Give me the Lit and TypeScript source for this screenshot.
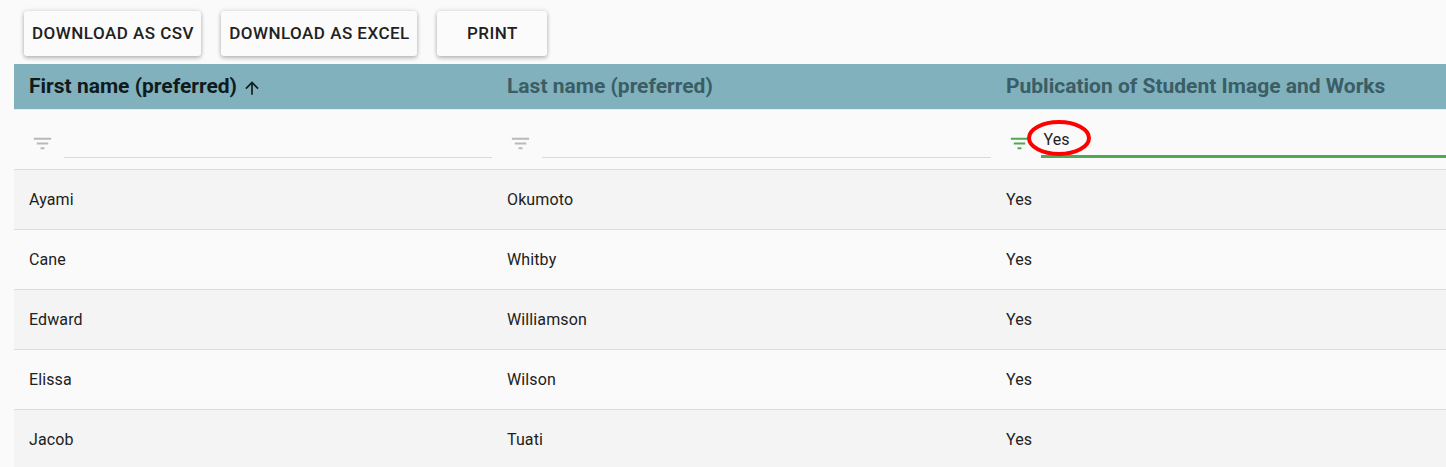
import { LitElement, html, css } from "lit";
import { customElement, property } from "lit/decorators.js";

const rows = [
  ["Ayami", "Okumoto", "Yes"],
  ["Cane", "Whitby", "Yes"],
  ["Edward", "Williamson", "Yes"],
  ["Elissa", "Wilson", "Yes"],
  ["Jacob", "Tuati", "Yes"],
];

@customElement("filter-field")
class FilterField extends LitElement {
  static styles = css`
    :host { display: flex; height: 59px; box-sizing: border-box; padding: 0 0 0 17px; }
    .icon { width: 23px; height: 23px; margin: 22px 10px 0 0; fill: #b9b9b9; flex: none; }
    .field { flex: 1; height: 48px; box-sizing: border-box; border-bottom: 1px solid #dadada; font-size: 16px; line-height: 19px; letter-spacing: 0.1px; color: #212121; padding: 20px 0 0 2.5px; position: relative; }
    .field.on { border-bottom: 3px solid #4fa953; }
    .icon.on { fill: #4fa953; }
    .ring { position: absolute; left: -14px; top: 10px; width: 64px; height: 36px; overflow: visible; }
  `;
  @property({ type: Boolean, reflect: true }) active = false;
  @property() value = "";
  render() {
    const on = this.active ? "on" : "";
    return html`
      <svg class="icon ${on}" viewBox="0 0 24 24"><path d="M10 18h4v-2h-4v2zM3 6v2h18V6H3zm3 7h12v-2H6v2z" /></svg>
      <div class="field ${on}">${this.value}${this.active
        ? html`<svg class="ring" viewBox="0 0 64 36"><ellipse cx="32" cy="18" rx="30" ry="16" fill="none" stroke="#ff0000" stroke-width="4" /></svg>`
        : null}</div>`;
  }
}

@customElement("app-root")
class AppRoot extends LitElement {
  static styles = css`
    :host { display: block; height: 467px; overflow: hidden; background: #fafafa; font-family: Roboto, sans-serif; color: #212121; }
    .bar { display: flex; gap: 20px; height: 64px; box-sizing: border-box; padding: 11px 0 0 24px; }
    .btn { height: 45px; width: 177px; box-sizing: border-box; padding-left: 1px; border-radius: 3px; background: #fbfbfb; box-shadow: 0 2px 4px rgba(0,0,0,.24), 0 0 5px rgba(0,0,0,.12); font-size: 17px; font-weight: 500; letter-spacing: 0.48px; line-height: 45px; text-align: center; white-space: nowrap; color: #212121; }
    .btn.mid { width: 196px; }
    .btn.small { width: 110px; }
    .table { margin-left: 14px; }
    .row { display: grid; grid-template-columns: 478px 499px 1fr; height: 60px; box-sizing: border-box; border-bottom: 1px solid #dcdcdc; }
    .head { height: 46px; background: #80b1bd; border-bottom: 1px solid #e6eaeb; }
    .filters { height: 60px; }
    .odd { background: #f4f4f4; }
    .cell { padding-left: 15px; font-size: 16px; letter-spacing: 0.12px; line-height: 60px; }
    .head .cell { font-size: 21px; letter-spacing: 0; font-weight: 700; line-height: 24px; height: 44px; color: #3b5d65; white-space: nowrap; display: flex; align-items: center; }
    .head .sorted { color: #101b1e; }
    .arrow { width: 20px; height: 20px; margin: 3px 0 0 5px; fill: currentColor; }
  `;
  render() {
    return html`
      <div class="bar">
        <div class="btn">DOWNLOAD AS CSV</div>
        <div class="btn mid">DOWNLOAD AS EXCEL</div>
        <div class="btn small">PRINT</div>
      </div>
      <div class="table">
        <div class="row head">
          <div class="cell sorted">First name (preferred)<svg class="arrow" viewBox="0 0 24 24"><path d="M4 12l1.41 1.41L11 7.83V20h2V7.83l5.58 5.59L20 12l-8-8-8 8z" /></svg></div>
          <div class="cell">Last name (preferred)</div>
          <div class="cell">Publication of Student Image and Works</div>
        </div>
        <div class="row filters">
          <filter-field></filter-field>
          <filter-field></filter-field>
          <filter-field active value="Yes"></filter-field>
        </div>
        ${rows.map((r, i) => html`<div class="row ${i % 2 ? "" : "odd"}">${r.map((t) => html`<div class="cell">${t}</div>`)}</div>`)}
      </div>`;
  }
}
